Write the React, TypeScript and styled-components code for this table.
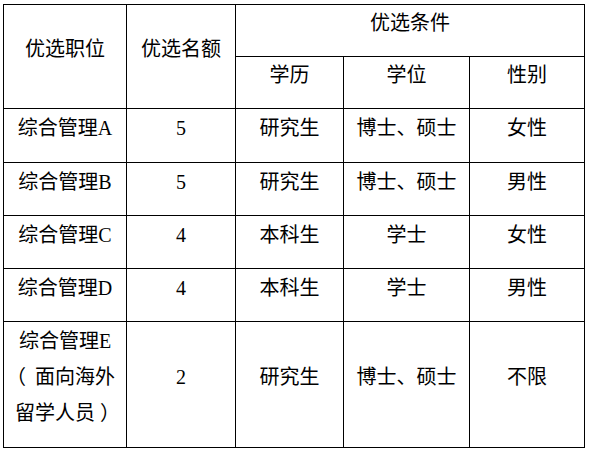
import React from 'react'
import styled, { createGlobalStyle } from 'styled-components'

const GlobalStyle = createGlobalStyle`
  html, body {
    margin: 0;
    padding: 0;
    background: #ffffff;
  }
  body {
    font-family: 'Liberation Serif', 'Noto Sans CJK SC', serif;
    color: #000000;
  }
`

const Page = styled.div`
  padding: 4px 0 0 3px;
`

const Table = styled.table`
  border-collapse: collapse;
  table-layout: fixed;
  width: 582px;
  font-size: 20px;
  line-height: 36px;
`

const Row = styled.tr<{ $height: number }>`
  height: ${({ $height }) => $height}px;
`

const Cell = styled.td`
  border: 1px solid #000000;
  padding: 0 2px 15px;
  text-align: center;
  vertical-align: middle;
  white-space: nowrap;
`

const HeadCell = styled(Cell).attrs({ as: 'th' })`
  font-weight: normal;
`

// the source document draws its full-width brackets nearer the middle of the box
const Bracket = styled.span<{ $shift: number }>`
  position: relative;
  left: ${({ $shift }) => $shift}px;
`

type Position = {
  name: React.ReactNode
  quota: number
  education: string
  degree: string
  gender: string
  height: number
}

const positions: Position[] = [
  { name: '综合管理A', quota: 5, education: '研究生', degree: '博士、硕士', gender: '女性', height: 54 },
  { name: '综合管理B', quota: 5, education: '研究生', degree: '博士、硕士', gender: '男性', height: 53 },
  { name: '综合管理C', quota: 4, education: '本科生', degree: '学士', gender: '女性', height: 53 },
  { name: '综合管理D', quota: 4, education: '本科生', degree: '学士', gender: '男性', height: 53 },
  {
    name: (
      <>
        综合管理E
        <br />
        <Bracket $shift={-9}>（</Bracket>面向海外
        <br />
        留学人员<Bracket $shift={5}>）</Bracket>
      </>
    ),
    quota: 2,
    education: '研究生',
    degree: '博士、硕士',
    gender: '不限',
    height: 126,
  },
]

export default function App() {
  return (
    <>
      <GlobalStyle />
      <Page>
        <Table>
          <colgroup>
            <col style={{ width: 123 }} />
            <col style={{ width: 109 }} />
            <col style={{ width: 108 }} />
            <col style={{ width: 126 }} />
            <col style={{ width: 115 }} />
          </colgroup>
          <thead>
            <Row $height={52}>
              <HeadCell rowSpan={2}>优选职位</HeadCell>
              <HeadCell rowSpan={2}>优选名额</HeadCell>
              <HeadCell colSpan={3}>优选条件</HeadCell>
            </Row>
            <Row $height={52}>
              <HeadCell>学历</HeadCell>
              <HeadCell>学位</HeadCell>
              <HeadCell>性别</HeadCell>
            </Row>
          </thead>
          <tbody>
            {positions.map((p, i) => (
              <Row key={i} $height={p.height}>
                <Cell>{p.name}</Cell>
                <Cell>{p.quota}</Cell>
                <Cell>{p.education}</Cell>
                <Cell>{p.degree}</Cell>
                <Cell>{p.gender}</Cell>
              </Row>
            ))}
          </tbody>
        </Table>
      </Page>
    </>
  )
}
